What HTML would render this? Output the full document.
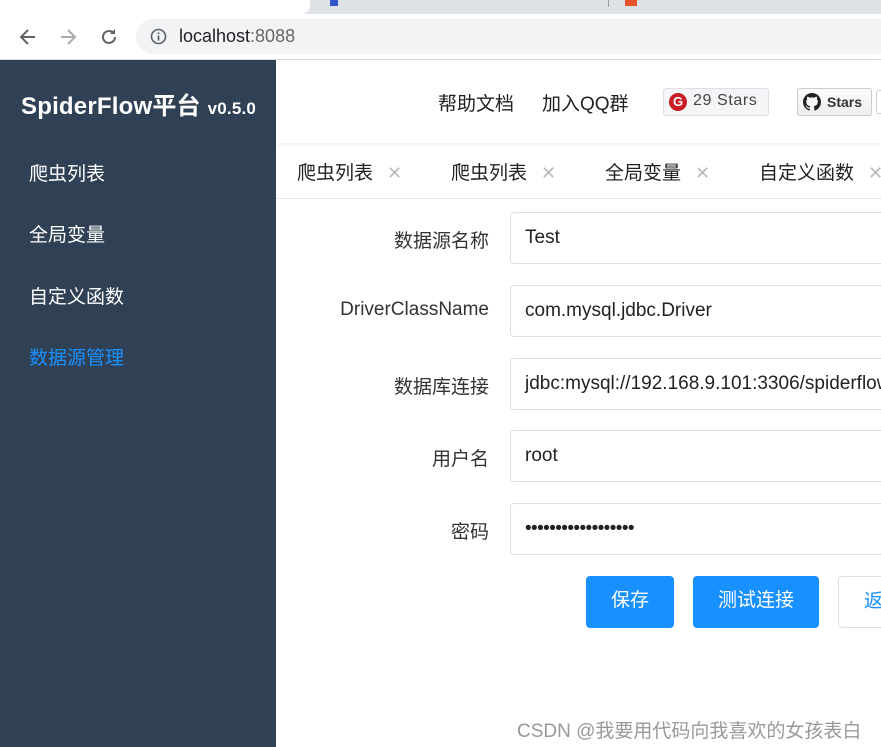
<!DOCTYPE html>
<html><head><meta charset="utf-8">
<style>
*{margin:0;padding:0;box-sizing:border-box}
body{width:881px;height:747px;overflow:hidden;background:#fff;font-family:"Liberation Sans","Noto Sans CJK SC",sans-serif;position:relative}
.abs{position:absolute;white-space:nowrap}
.lbl{position:absolute;right:392px;font-size:19px;color:#333;text-align:right;white-space:nowrap}
.inp{position:absolute;left:510px;width:400px;height:52px;border:1px solid #dcdfe6;border-radius:4px;font-size:19px;color:#222;padding:0 14px;line-height:50px;white-space:nowrap}
.tab{position:absolute;top:158px;font-size:19px;color:#222;white-space:nowrap}
.tab span{color:#bbb;margin-left:14px;font-size:18px}
.btn{position:absolute;top:576px;height:52px;border-radius:4px;background:#1890ff;color:#fff;font-size:19px;text-align:center;line-height:50px}
</style></head><body>
<div class="abs" style="left:0;top:0;width:881px;height:14px;background:#dee1e6"></div>
<div class="abs" style="left:0;top:0;width:310px;height:14px;background:#fff;border-radius:0 0 8px 0"></div>
<div class="abs" style="left:330px;top:0;width:8px;height:6px;background:#3355cc"></div>
<div class="abs" style="left:625px;top:0;width:12px;height:6px;background:#e8542a"></div>
<div class="abs" style="left:608px;top:0;width:1px;height:7px;background:#999"></div>
<div class="abs" style="left:0;top:14px;width:881px;height:46px;background:#fff;border-bottom:1px solid #dadce0"></div>
<svg class="abs" style="left:18px;top:27px" width="20" height="20" viewBox="0 0 20 20"><path d="M17 10H4M10 3L3 10l7 7" stroke="#5f6368" stroke-width="2" fill="none"/></svg>
<svg class="abs" style="left:58px;top:27px" width="20" height="20" viewBox="0 0 20 20"><path d="M3 10h13M10 3l7 7-7 7" stroke="#aaa" stroke-width="2" fill="none"/></svg>
<svg class="abs" style="left:98px;top:26px" width="22" height="22" viewBox="0 0 22 22"><path d="M17 11a6 6 0 1 1-2-4.5" stroke="#5f6368" stroke-width="2" fill="none"/><path d="M17 3v5h-5z" fill="#5f6368"/></svg>
<div class="abs" style="left:136px;top:19px;width:760px;height:35px;background:#f1f3f4;border-radius:18px"></div>
<svg class="abs" style="left:150px;top:28px" width="17" height="17" viewBox="0 0 17 17"><circle cx="8.5" cy="8.5" r="7" stroke="#5f6368" stroke-width="1.6" fill="none"/><path d="M8.5 7.5v5M8.5 4.5v1.6" stroke="#5f6368" stroke-width="1.8"/></svg>
<div class="abs" style="left:179px;top:26px;font-size:18px;color:#202124">localhost<span style="color:#666">:8088</span></div>
<div class="abs" style="left:0;top:60px;width:276px;height:687px;background:#304156"></div>
<div class="abs" style="left:21px;top:86px;font-size:24px;font-weight:bold;color:#fff;letter-spacing:0.2px">SpiderFlow平台 <span style="font-size:17px">v0.5.0</span></div>
<div class="abs" style="left:29px;top:159px;font-size:19px;color:#fff">爬虫列表</div>
<div class="abs" style="left:29px;top:220px;font-size:19px;color:#fff">全局变量</div>
<div class="abs" style="left:29px;top:282px;font-size:19px;color:#fff">自定义函数</div>
<div class="abs" style="left:29px;top:343px;font-size:19px;color:#1890ff">数据源管理</div>
<div class="abs" style="left:276px;top:60px;width:605px;height:83px;background:#fff;box-shadow:0 2px 4px rgba(0,0,0,0.06)"></div>
<div class="abs" style="left:438px;top:89px;font-size:19px;color:#222">帮助文档</div>
<div class="abs" style="left:542px;top:89px;font-size:19px;color:#222">加入QQ群</div>
<div class="abs" style="left:663px;top:88px;width:106px;height:28px;border:1px solid #dcdfe6;border-radius:3px;background:#f4f5f6"></div>
<div class="abs" style="left:669px;top:93px;width:18px;height:18px;border-radius:50%;background:#c71d23;color:#fff;font-size:13px;font-weight:bold;text-align:center;line-height:18px">G</div>
<div class="abs" style="left:693px;top:92px;font-size:16px;color:#444;letter-spacing:0.6px">29 Stars</div>
<div class="abs" style="left:797px;top:88px;width:75px;height:28px;border:1px solid #ccc;border-radius:3px;background:linear-gradient(#fcfcfc,#eee)"></div>
<svg class="abs" style="left:803px;top:93px" width="18" height="18" viewBox="0 0 16 16"><path fill="#222" d="M8 0C3.58 0 0 3.58 0 8c0 3.540 2.29 6.53 5.47 7.59.4.07.55-.17.55-.38v-1.330c-2.23.48-2.7-1.07-2.7-1.07-.36-.92-.89-1.17-.89-1.17-.73-.5.05-.49.05-.49.8.06 1.23.83 1.23.83.72 1.22 1.87.87 2.33.66.07-.52.28-.87.51-1.07-1.78-.2-3.64-.89-3.640-3.95 0-.87.31-1.59.82-2.15-.08-.2-.36-1.02.08-2.12 0 0 .67-.21 2.2.82a7.6 7.6 0 0 1 4 0c1.53-1.04 2.2-.82 2.2-.82.44 1.1.16 1.92.08 2.12.51.56.82 1.27.82 2.15 0 3.07-1.87 3.75-3.65 3.95.29.25.54.73.54 1.48v2.2c0 .21.15.46.55.38A8 8 0 0 0 16 8c0-4.42-3.58-8-8-8z"/></svg>
<div class="abs" style="left:827px;top:94px;font-size:14px;font-weight:bold;color:#333">Stars</div>
<div class="abs" style="left:876px;top:90px;width:8px;height:24px;border:1px solid #ccc;border-right:none;border-radius:3px 0 0 3px"></div>
<div class="abs" style="left:276px;top:198px;width:605px;height:1px;background:#e4e7ed"></div>
<div class="tab" style="left:297px">爬虫列表<span>✕</span></div>
<div class="tab" style="left:451px">爬虫列表<span>✕</span></div>
<div class="tab" style="left:605px">全局变量<span>✕</span></div>
<div class="tab" style="left:759px">自定义函数<span>✕</span></div>
<div class="lbl" style="top:226px">数据源名称</div>
<div class="inp" style="top:212px">Test</div>
<div class="lbl" style="top:299px">DriverClassName</div>
<div class="inp" style="top:285px">com.mysql.jdbc.Driver</div>
<div class="lbl" style="top:372px">数据库连接</div>
<div class="inp" style="top:358px">jdbc:mysql://192.168.9.101:3306/spiderflow</div>
<div class="lbl" style="top:444px">用户名</div>
<div class="inp" style="top:430px">root</div>
<div class="lbl" style="top:517px">密码</div>
<div class="inp" style="top:503px;letter-spacing:-0.6px">••••••••••••••••••</div>
<div class="btn" style="left:586px;width:88px">保存</div>
<div class="btn" style="left:693px;width:126px">测试连接</div>
<div class="abs" style="left:838px;top:576px;width:100px;height:52px;border:1px solid #dcdfe6;border-radius:4px;color:#1890ff;font-size:19px;line-height:50px;padding-left:25px">返回</div>
<div class="abs" style="left:517px;top:716px;font-size:19px;color:#999">CSDN @我要用代码向我喜欢的女孩表白</div>
</body></html>
